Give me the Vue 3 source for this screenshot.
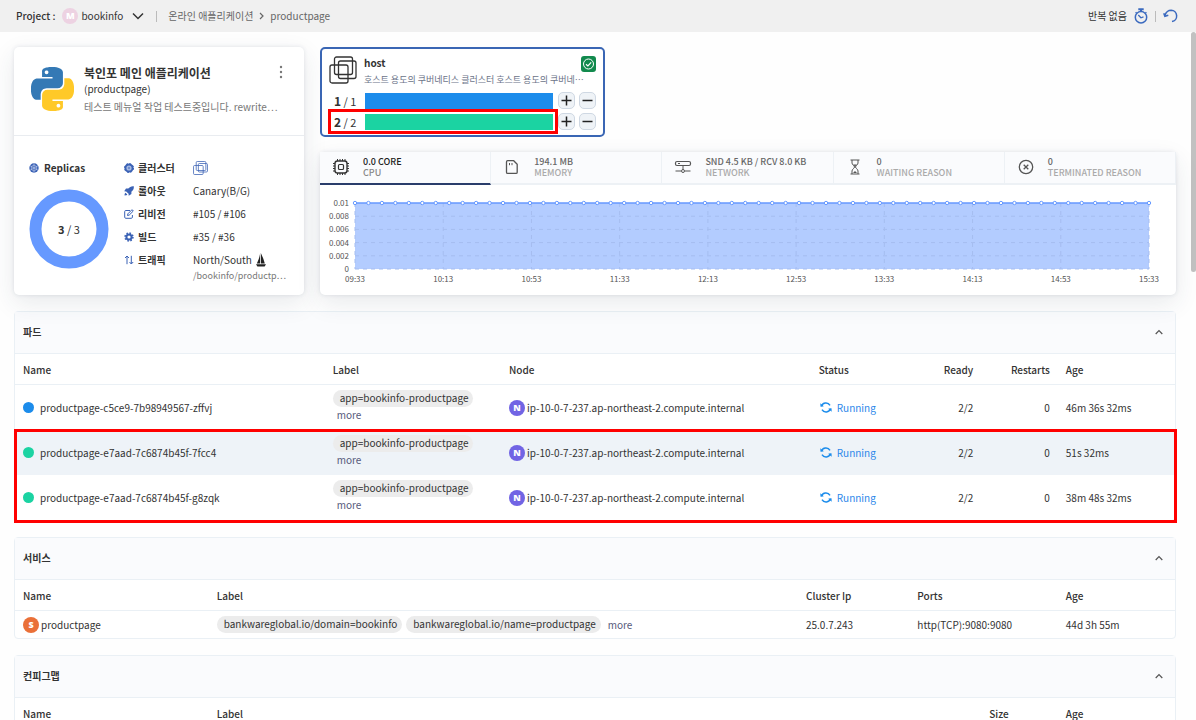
<script setup>
import { ref } from 'vue'

const infoRows = [
  { icon: 'helm', label: '클러스터', value: '' },
  { icon: 'rocket', label: '롤아웃', value: 'Canary(B/G)' },
  { icon: 'edit', label: '리비전', value: '#105 / #106' },
  { icon: 'gear', label: '빌드', value: '#35 / #36' },
  { icon: 'arrows', label: '트래픽', value: 'North/South' },
]

const hostRows = [
  { current: 1, total: 1, tone: 'blue', marked: false },
  { current: 2, total: 2, tone: 'green', marked: true },
]

const activeTab = ref('cpu')
const tabs = [
  { id: 'cpu', value: '0.0 CORE', label: 'CPU' },
  { id: 'memory', value: '194.1 MB', label: 'MEMORY' },
  { id: 'network', value: 'SND 4.5 KB / RCV 8.0 KB', label: 'NETWORK' },
  { id: 'waiting', value: '0', label: 'WAITING REASON' },
  { id: 'terminated', value: '0', label: 'TERMINATED REASON' },
]

const yTicks = ['0.01', '0.008', '0.006', '0.004', '0.002', '0']
const xTicks = ['09:33', '10:13', '10:53', '11:33', '12:13', '12:53', '13:33', '14:13', '14:53', '15:33']
const points = Array.from({ length: 60 }, (_, i) => (i * 100) / 59 + '%')
const tickX = (i) => (i * 100) / 9 + '%'
const tickY = (i) => i * 20 + '%'

const pods = [
  { name: 'productpage-c5ce9-7b98949567-zffvj', tone: 'blue', age: '46m 36s 32ms' },
  { name: 'productpage-e7aad-7c6874b45f-7fcc4', tone: 'green', age: '51s 32ms' },
  { name: 'productpage-e7aad-7c6874b45f-g8zqk', tone: 'green', age: '38m 48s 32ms' },
]
</script>

<template>
  <div class="app">
    <header class="topbar">
      <span class="project-label">Project :</span>
      <button class="project-button" type="button">
        <span class="badge badge-m">M</span>
        <span>bookinfo</span>
        <svg width="12" height="8" viewBox="0 0 12 8"><path d="M1 1.5l5 5 5-5" fill="none" stroke="#333" stroke-width="1.5" /></svg>
      </button>
      <span class="bar-divider"></span>
      <nav class="crumbs">
        <a href="#">온라인 애플리케이션</a>
        <svg width="5" height="8" viewBox="0 0 5 8"><path d="M1 1l3 3-3 3" fill="none" stroke="#666" stroke-width="1.2" /></svg>
        <a href="#">productpage</a>
      </nav>
      <div class="refresh">
        <span>반복 없음</span>
        <button type="button" aria-label="반복 설정">
          <svg width="14" height="16" viewBox="0 0 14 16" fill="none" stroke="#3b6abf" stroke-width="1.5"><circle cx="7" cy="9.3" r="5.7" /><path d="M7 3.5V1.5M4.3 1.2h5.4" stroke-width="2" /><path d="M4.3 7l2.6 2.8 2.6-.9M1.6 4.2l1 1M12.4 4.2l-1 1" stroke-width="1.3" /></svg>
        </button>
        <span class="bar-divider"></span>
        <button type="button" aria-label="새로고침">
          <svg width="15" height="14" viewBox="0 0 15 14" fill="none" stroke="#3b6abf" stroke-width="1.5"><path d="M2 6.3C3 3.3 5.400 1.300 8.200 1.300a5.700 5.700 0 0 1 .8 11.300" /><path d="M.8 4.200L1.900 7.300l3.400-1" stroke-width="1.600" /></svg>
        </button>
      </div>
    </header>

    <main class="content">
      <div class="scroll-thumb"></div>

      <div class="overview">
        <section class="card app-card">
          <div class="app-head">
            <svg class="python" width="43" height="44" viewBox="0 0 24 24" preserveAspectRatio="none">
              <path fill="#3479b5" fill-rule="evenodd" d="M14.25.18l.9.2.73.26.59.3.45.32.34.34.25.34.16.33.1.3.04.26.02.2-.01.13V8.500l-.05.63-.13.55-.21.46-.26.38-.3.31-.33.25-.35.19-.35.14-.33.1-.3.07-.26.04-.21.02H8.770l-.69.05-.59.14-.5.22-.41.27-.33.32-.27.35-.2.36-.15.37-.1.35-.07.32-.04.27-.02.21v3.060H3.170l-.21-.03-.28-.07-.32-.12-.35-.18-.36-.26-.36-.36-.35-.46-.32-.59-.28-.73-.21-.88-.14-1.050-.05-1.230.06-1.220.16-1.040.24-.87.32-.71.36-.57.4-.44.42-.33.42-.24.4-.16.36-.1.32-.05.24-.01h.16l.06.01h8.160v-.83H6.180l-.01-2.750-.02-.37.05-.34.11-.31.17-.28.25-.26.31-.23.38-.2.44-.18.51-.15.58-.12.64-.1.71-.06.77-.04.84-.02 1.270.05zM7.950 2.160l-.23.33-.08.41.08.41.23.34.33.22.41.09.41-.09.33-.22.23-.34.08-.41-.08-.41-.23-.33-.33-.22-.41-.09-.41.09z" />
              <path fill="#ffc928" fill-rule="evenodd" d="M21.040 6.110l.28.06.32.12.35.18.36.27.36.35.35.47.32.59.28.73.21.88.14 1.040.05 1.230-.06 1.230-.16 1.040-.24.86-.32.71-.36.57-.4.45-.42.33-.42.24-.4.16-.36.09-.32.05-.24.02-.16-.01h-8.220v.82h5.840l.01 2.760.02.36-.05.34-.11.31-.17.29-.25.25-.31.24-.38.2-.44.17-.51.15-.58.13-.64.09-.71.07-.77.04-.84.01-1.270-.04-1.070-.14-.9-.2-.73-.25-.59-.3-.45-.33-.34-.34-.25-.34-.16-.33-.1-.3-.04-.25-.02-.2.01-.13v-5.340l.05-.64.13-.54.21-.46.26-.38.3-.32.33-.24.35-.2.35-.14.33-.1.3-.06.26-.04.21-.02.13-.01h5.840l.69-.05.59-.14.5-.21.41-.28.33-.32.27-.35.2-.36.15-.36.1-.35.07-.32.04-.28.02-.21V6.070h2.090zM14.570 20.360l-.23.33-.08.41.08.41.23.33.33.23.41.08.41-.08.33-.23.23-.33.08-.41-.08-.41-.23-.33-.33-.23-.41-.08-.41.08z" />
            </svg>
            <div class="app-title">
              <h1>북인포 메인 애플리케이션</h1>
              <p>(productpage)</p>
              <p class="desc">테스트 메뉴얼 작업 테스트중입니다. rewrite⋯</p>
            </div>
            <button class="kebab" type="button" aria-label="메뉴">
              <svg width="4" height="14" viewBox="0 0 4 14" fill="#777"><circle cx="2" cy="2" r="1.200" /><circle cx="2" cy="7" r="1.200" /><circle cx="2" cy="12" r="1.200" /></svg>
            </button>
          </div>
          <div class="app-body">
            <div class="replicas">
              <div class="info-label">
                <svg width="10" height="10" viewBox="0 0 10 10"><circle cx="5" cy="5" r="4.700" fill="#3b62b5" /><path d="M5 .5v9M1 2.700l8 4.600M9 2.700L1 7.300M5 2L2.400 3.500v3L5 8l2.600-1.500v-3z" fill="none" stroke="#c3d0ec" stroke-width=".6" /></svg>
                <span>Replicas</span>
              </div>
              <div class="donut">
                <svg width="80" height="80" viewBox="0 0 80 80"><circle cx="40" cy="40" r="33.500" fill="none" stroke="#6699ff" stroke-width="12" /></svg>
                <span><b>3</b> / 3</span>
              </div>
            </div>
            <dl class="info">
              <template v-for="row in infoRows" :key="row.icon">
                <dt class="info-label">
                  <svg v-if="row.icon === 'helm'" width="10" height="10" viewBox="0 0 10 10"><circle cx="5" cy="5" r="3.600" fill="#a9bce3" stroke="#3b62b5" stroke-width="2" /><circle cx="5" cy="5" r="4.500" fill="none" stroke="#3b62b5" stroke-width="1" stroke-dasharray="2 1.500" /><circle cx="5" cy="5" r="1.200" fill="#6f8dcc" /></svg>
                  <svg v-else-if="row.icon === 'rocket'" width="10" height="10" viewBox="0 0 10 10"><path fill="#3b62b5" d="M9.800.2C7.500-.1 5.500.8 4.300 2.600H2L.2 5.300l2 .1 2.400 2.400.1 2L7.400 8V5.700C9.200 4.500 10.100 2.500 9.800.2zM1.500 6.700C.7 7.200.5 8.200.6 9.400c1.200.1 2.200-.1 2.700-.9z" /></svg>
                  <svg v-else-if="row.icon === 'edit'" width="10" height="10" viewBox="0 0 10 10" fill="none" stroke="#3b62b5"><path d="M6 1.500H1.800C1 1.500.7 2 .7 2.600v5.600c0 .7.400 1.100 1.100 1.100h5.500c.7 0 1.100-.4 1.100-1.100V6" /><path d="M3.500 6.500l.4-1.700L8 .7l1.300 1.300-4.100 4.100z" /></svg>
                  <svg v-else-if="row.icon === 'gear'" width="10" height="10" viewBox="0 0 10 10" fill="none" stroke="#3b62b5"><circle cx="5" cy="5" r="2.600" stroke-width="2" /><circle cx="5" cy="5" r="3.900" stroke-width="1.600" stroke-dasharray="1.560 1.500" /></svg>
                  <svg v-else width="10" height="10" viewBox="0 0 10 10" fill="none" stroke="#3b62b5"><path d="M3 9.200V1.200M1 3l2-2 2 2M7.300.8v8M5.500 7l1.800 2 1.900-2" /></svg>
                  <span>{{ row.label }}</span>
                </dt>
                <dd>
                  <svg v-if="row.icon === 'helm'" width="15" height="14" viewBox="0 0 28 28" preserveAspectRatio="none" fill="none" stroke="#3b62b5" stroke-width="1.500"><rect x="6" y="1" width="18" height="18" rx="2" /><rect x="10" y="5" width="17" height="17" rx="2" /><rect x="1" y="9" width="18" height="18" rx="2" /></svg>
                  <span v-else>{{ row.value }}</span>
                  <template v-if="row.icon === 'arrows'">
                    <svg class="sail" width="10" height="14" viewBox="0 0 10 14" fill="#222"><path d="M4 1v9.500H.8C2.300 7.800 3.500 4.500 4 1zM4.800 0C6.500 3.500 8 7 8.800 10.500h-4zM0 11.300h10L8.600 13.500H1.400z" /></svg>
                    <small>/bookinfo/productp⋯</small>
                  </template>
                </dd>
              </template>
            </dl>
          </div>
        </section>

        <div class="right">
          <section class="host-card">
            <div class="host-head">
              <svg width="28" height="28" viewBox="0 0 28 28" fill="none" stroke="#333" stroke-width="1.300"><rect x="5.500" y="1" width="18" height="17.500" rx="2" /><rect x="9.500" y="5" width="17.500" height="17.500" rx="2" /><rect x="1" y="9" width="18" height="18" rx="2" /></svg>
              <div class="host-title">
                <h2>host</h2>
                <p>호스트 용도의 쿠버네티스 클러스터 호스트 용도의 쿠버네⋯</p>
              </div>
              <svg class="ok" width="15" height="16" viewBox="0 0 15 16"><rect width="15" height="16" rx="3" fill="#128a4e" /><g fill="none" stroke="#fff"><circle cx="7.500" cy="8" r="5" /><path d="M5 8.200l1.900 1.800 3.300-3.700" stroke-width="1.200" /></g></svg>
            </div>
            <div v-for="row in hostRows" :key="row.current" class="host-row">
              <span class="ratio"><b>{{ row.current }}</b> / {{ row.total }}</span>
              <span class="bar" :class="row.tone"></span>
              <button type="button" aria-label="늘리기"><svg width="11" height="11" viewBox="0 0 11 11"><path d="M.5 5.500h10M5.500.5v10" stroke="#222" stroke-width="1.500" /></svg></button>
              <button type="button" aria-label="줄이기"><svg width="11" height="11" viewBox="0 0 11 11"><path d="M.5 5.500h10" stroke="#222" stroke-width="1.500" /></svg></button>
              <span v-if="row.marked" class="row-mark"></span>
            </div>
          </section>

          <section class="card chart-card">
            <div class="tabs" role="tablist">
              <button v-for="tab in tabs" :key="tab.id" type="button" role="tab" :aria-selected="activeTab === tab.id" :class="{ active: activeTab === tab.id }" @click="activeTab = tab.id">
                <svg width="18" height="18" viewBox="0 0 18 18" fill="none" stroke="#555">
                  <g v-if="tab.id === 'cpu'" stroke="#333"><rect x="3" y="3" width="12" height="12" rx="2.500" stroke-width="1.400" /><rect x="6.500" y="6.500" width="5" height="5" rx="1" stroke-width="1.200" /><path d="M5.500 1v2M8 1v2M10.500 1v2M13 1v2M5.500 15v2M8 15v2M10.500 15v2M13 15v2M1 5.500h2M1 8h2M1 10.500h2M1 13h2M15 5.500h2M15 8h2M15 10.500h2M15 13h2" /></g>
                  <g v-else-if="tab.id === 'memory'"><path d="M4.700 2.700h6l3.500 3.500v8c0 .8-.4 1.200-1.200 1.200H4.700c-.8 0-1.200-.4-1.200-1.200V3.900c0-.8.4-1.200 1.200-1.200z" stroke-width="1.300" /><path d="M6.500 5v2.200M9 5v2.200" /></g>
                  <g v-else-if="tab.id === 'network'"><rect x="1.500" y="3.500" width="15" height="4" rx="1.500" stroke-width="1.200" /><path d="M9 7.500v4M1.500 13h5.500M11 13h5.500M4 5.500h2" /><circle cx="9" cy="13" r="1.500" /></g>
                  <g v-else-if="tab.id === 'waiting'"><path d="M4.500 2h9M4.500 16h9M6 2v3c0 2 2.500 2.500 2.500 4S6 11 6 13v3M12 2v3c0 2-2.500 2.500-2.500 4s2.500 2 2.500 4v3" /><path d="M7 6.500h4L9 8.500zM7 15l2-2 2 2z" fill="#555" stroke="none" /></g>
                  <g v-else><circle cx="9" cy="9" r="6.700" stroke-width="1.300" /><path d="M6.700 6.700l4.600 4.600M11.300 6.700l-4.600 4.600" stroke-width="1.300" /></g>
                </svg>
                <span class="tab-text"><span>{{ tab.value }}</span><small>{{ tab.label }}</small></span>
              </button>
            </div>
            <div class="chart">
              <svg class="plot" width="100%" height="66">
                <rect width="100%" height="100%" fill="#b3ccff" />
                <g stroke="#a5bdf0" stroke-dasharray="4 4">
                  <line v-for="i in 5" :key="'h' + i" x1="0" x2="100%" :y1="tickY(i)" :y2="tickY(i)" />
                  <line v-for="i in 10" :key="'v' + i" :x1="tickX(i - 1)" :x2="tickX(i - 1)" y1="0" y2="100%" />
                </g>
                <line x1="0" x2="100%" y1="0" y2="0" stroke="#6699ff" stroke-width="1.500" />
                <g fill="#fff" stroke="#6699ff"><circle v-for="x in points" :key="x" :cx="x" cy="0" r="1.700" /></g>
                <g class="axis" text-anchor="end"><text v-for="(t, i) in yTicks" :key="t" x="0" dx="-6" :y="tickY(i)" dy="3">{{ t }}</text></g>
                <g class="axis" text-anchor="middle"><text v-for="(t, i) in xTicks" :key="t" :x="tickX(i)" y="100%" dy="13">{{ t }}</text></g>
              </svg>
            </div>
          </section>
        </div>
      </div>

      <section class="panel">
        <header class="panel-head">
          <h2>파드</h2>
          <button type="button" aria-label="접기"><svg width="8" height="6" viewBox="0 0 8 6"><path d="M.7 5L4 1.500 7.300 5" fill="none" stroke="#555" stroke-width="1.200" /></svg></button>
        </header>
        <table class="pods">
          <colgroup><col class="w-310"><col class="w-176"><col class="w-310"><col class="w-107"><col class="w-64"><col class="w-77"><col></colgroup>
          <thead><tr><th>Name</th><th>Label</th><th>Node</th><th>Status</th><th class="num">Ready</th><th class="num">Restarts</th><th>Age</th></tr></thead>
          <tbody>
            <tr v-for="(pod, i) in pods" :key="pod.name" :class="{ tinted: i === 1 }">
              <td><span class="with-icon"><i class="dot" :class="pod.tone"></i>{{ pod.name }}</span></td>
              <td class="label-cell"><span class="pill">app=bookinfo-productpage</span><a class="more" href="#">more</a></td>
              <td><span class="with-icon node"><span class="badge badge-n">N</span>ip-10-0-7-237.ap-northeast-2.compute.internal</span></td>
              <td>
                <span class="with-icon running">
                  <svg width="12" height="11" viewBox="0 0 12 11" fill="none" stroke="#1c8ceb" stroke-width="1.500"><path d="M1.500 4.200A4.700 4.700 0 0 1 10 3.300M10.500 6.800A4.700 4.700 0 0 1 2 7.700" /><path d="M.3 1.300l.2 3.500 3.400-.6zM11.700 9.700l-.2-3.500-3.400.6z" fill="#1c8ceb" stroke="none" /></svg>
                  Running
                </span>
              </td>
              <td class="num">2/2</td>
              <td class="num">0</td>
              <td>{{ pod.age }}</td>
            </tr>
          </tbody>
        </table>
        <div class="pods-mark"></div>
      </section>

      <section class="panel">
        <header class="panel-head">
          <h2>서비스</h2>
          <button type="button" aria-label="접기"><svg width="8" height="6" viewBox="0 0 8 6"><path d="M.7 5L4 1.500 7.300 5" fill="none" stroke="#555" stroke-width="1.200" /></svg></button>
        </header>
        <table class="services">
          <colgroup><col class="w-194"><col class="w-589"><col class="w-111"><col class="w-149"><col></colgroup>
          <thead><tr><th>Name</th><th>Label</th><th>Cluster Ip</th><th>Ports</th><th>Age</th></tr></thead>
          <tbody>
            <tr>
              <td><span class="with-icon node"><span class="badge badge-s">S</span>productpage</span></td>
              <td><span class="labels"><span class="pill">bankwareglobal.io/domain=bookinfo</span><span class="pill">bankwareglobal.io/name=productpage</span><a class="more" href="#">more</a></span></td>
              <td>25.0.7.243</td>
              <td>http(TCP):9080:9080</td>
              <td>44d 3h 55m</td>
            </tr>
          </tbody>
        </table>
      </section>

      <section class="panel">
        <header class="panel-head">
          <h2>컨피그맵</h2>
          <button type="button" aria-label="접기"><svg width="8" height="6" viewBox="0 0 8 6"><path d="M.7 5L4 1.500 7.300 5" fill="none" stroke="#555" stroke-width="1.200" /></svg></button>
        </header>
        <table>
          <colgroup><col class="w-194"><col class="w-772"><col class="w-77"><col></colgroup>
          <thead><tr><th>Name</th><th>Label</th><th>Size</th><th>Age</th></tr></thead>
        </table>
      </section>
    </main>
  </div>
</template>

<style>
body {
  background: #fefefe;
}
</style>

<style scoped>
* {
  box-sizing: border-box;
}
.app {
  display: flex;
  flex-direction: column;
  height: 100vh;
  overflow: hidden;
  color: #333;
  font: 10px/16px "Noto Sans CJK KR", "Noto Sans", sans-serif;
}
h1, h2, p, dl, dd {
  margin: 0;
}
svg {
  display: block;
  flex: none;
}
a {
  color: inherit;
  text-decoration: none;
}
button {
  display: flex;
  align-items: center;
  justify-content: center;
  padding: 0;
  border: 0;
  background: none;
  color: inherit;
  font: inherit;
  cursor: pointer;
}

.topbar {
  display: flex;
  flex: none;
  align-items: center;
  height: 32px;
  padding: 0 18px 0 16px;
  background: #f0f0f0;
}
.project-label {
  margin-right: 7px;
  font-weight: 500;
}
.project-button {
  gap: 3px;
}
.project-button svg {
  margin-left: 6px;
}
.bar-divider {
  width: 1px;
  height: 11px;
  background: #bbb;
}
.topbar > .bar-divider {
  margin: 0 11px 0 12px;
}
.crumbs {
  display: flex;
  align-items: center;
  gap: 6px;
  color: #666;
}
.refresh {
  display: flex;
  align-items: center;
  gap: 7px;
  margin-left: auto;
}
.badge {
  display: inline-flex;
  flex: none;
  align-items: center;
  justify-content: center;
  width: 16px;
  height: 16px;
  border-radius: 50%;
  color: #fff;
  font: 800 9px/16px "Open Sans", sans-serif;
}
.badge-m {
  background: #edd2e2;
}
.badge-n {
  background: #7164e4;
}
.badge-s {
  background: #ea7038;
}

.content {
  position: relative;
  display: flex;
  flex: 1;
  flex-direction: column;
  gap: 16px;
  min-height: 0;
  padding: 15px 20px 0 14px;
  overflow: hidden;
}
.content > * {
  flex: none;
}
.scroll-thumb {
  position: absolute;
  top: 0;
  right: 0;
  width: 5px;
  height: 240px;
  border-radius: 3px;
  background: #c1c1c1;
}
.overview {
  position: relative;
  z-index: 1;
  display: grid;
  grid-template-columns: 290px 1fr;
  gap: 16px;
}
.card {
  border-radius: 5px;
  background: #fff;
  box-shadow: 0 0 4px rgba(40, 60, 80, 0.12), 0 8px 24px rgba(40, 60, 80, 0.1);
}

.app-head {
  display: flex;
  height: 89px;
  padding: 18px 21px 0 17px;
  border-bottom: 1px solid #e9ecf0;
}
.python {
  margin: 2px 10px 0 0;
}
.app-title {
  white-space: nowrap;
}
.app-title h1 {
  font-size: 12px;
  font-weight: 700;
  line-height: 16px;
}
.app-title .desc {
  color: #777;
  line-height: 20px;
}
.kebab {
  align-self: flex-start;
  margin-left: auto;
}
.app-body {
  display: flex;
  padding: 21px 14px 14px 15px;
}
.replicas {
  width: 95px;
}
.info-label {
  display: flex;
  align-items: center;
  gap: 4px;
  height: 22px;
  font-weight: 700;
}
.replicas .info-label {
  gap: 5px;
}
.donut {
  display: grid;
  place-items: center;
  width: 80px;
  margin-top: 10px;
  font-size: 11px;
}
.donut > * {
  grid-area: 1 / 1;
}
.info {
  display: grid;
  flex: 1;
  grid-template-columns: 69px 1fr;
  row-gap: 1px;
  min-width: 0;
}
.info dd {
  display: flex;
  flex-wrap: wrap;
  align-items: center;
  min-width: 0;
  min-height: 22px;
  line-height: 22px;
}
.info small {
  width: 100%;
  color: #777;
  font-size: 9px;
  line-height: 10px;
  white-space: nowrap;
}
.sail {
  margin-left: 4px;
}

.right {
  display: flex;
  flex-direction: column;
  gap: 15px;
  min-width: 0;
}
.host-card {
  width: 285px;
  height: 90px;
  padding: 7px 7px 0;
  border: 2px solid #3a66b4;
  border-radius: 5px;
  background: #fff;
}
.host-head {
  display: flex;
  height: 34px;
}
.host-title {
  flex: 1;
  margin-left: 7px;
}
.host-title h2 {
  font-size: 10px;
  line-height: 14px;
}
.host-title p {
  width: 232px;
  margin-top: 2px;
  color: #6b7388;
  font-size: 9px;
  white-space: nowrap;
}
.ok {
  margin-left: -16px;
}
.host-row {
  position: relative;
  display: flex;
  align-items: center;
  height: 21px;
}
.ratio {
  width: 36px;
  padding-left: 5px;
  font-size: 11px;
}
.ratio b {
  font-size: 12px;
}
.bar {
  flex: 1;
  height: 16px;
}
.blue {
  background: #1c8ceb;
}
.green {
  background: #1bd3a2;
}
.host-row button {
  width: 17px;
  height: 17px;
  margin-left: 4px;
  border: 1px solid #cfd8e3;
  border-radius: 5px;
  background: #eff3f7;
}
.bar + button {
  margin-left: 5px;
}
.row-mark {
  position: absolute;
  inset: -2px 38px -2px -1px;
  border: 3px solid #f00;
}

.chart-card {
  flex: 1;
}
.tabs {
  display: grid;
  grid-template-columns: repeat(5, 1fr);
  height: 33px;
}
.tabs button {
  justify-content: flex-start;
  gap: 13px;
  padding: 0 0 1px 12px;
  border-right: 1px solid #edf1f5;
  border-bottom: 2px solid #edf1f5;
  background: #fafbfd;
  color: #666;
  text-align: left;
}
.tabs button.active {
  border-bottom-color: #2a3d6b;
  color: #222;
}
.tab-text {
  display: flex;
  flex-direction: column;
  font-size: 9px;
  font-weight: 500;
  line-height: 11px;
}
.tab-text small {
  color: #aaa;
  font-size: 9px;
}
.tabs .active small {
  color: #888;
}
.chart {
  padding: 18px 27px 26px 35px;
}
.plot {
  overflow: visible;
}
.axis {
  fill: #555;
  font-size: 8px;
}

.panel {
  position: relative;
  border: 1px solid #eaf0f5;
  border-radius: 4px;
  background: #fff;
}
.panel-head {
  display: flex;
  align-items: center;
  justify-content: space-between;
  height: 42px;
  padding: 0 12px 2px 8px;
  border-bottom: 1px solid #eaf0f5;
  background: #fafbfd;
}
.panel-head h2 {
  font-size: 10px;
}
table {
  width: 100%;
  border-collapse: separate;
  border-spacing: 0;
  table-layout: fixed;
}
th, td {
  padding: 0 8px;
  text-align: left;
  white-space: nowrap;
}
th {
  height: 31px;
  padding-top: 2px;
  border-bottom: 1px solid #eaf0f5;
  font-weight: 500;
}
.pods td {
  height: 45px;
}
.services td {
  height: 27px;
}
th.num,
td.num {
  text-align: right;
}
.tinted {
  background: #eef3f8;
}
.w-310 { width: 26.7%; }
.w-176 { width: 15.2%; }
.w-107 { width: 9.2%; }
.w-64 { width: 5.5%; }
.w-77 { width: 6.6%; }
.w-194 { width: 16.7%; }
.w-589 { width: 50.8%; }
.w-111 { width: 9.6%; }
.w-149 { width: 12.8%; }
.w-772 { width: 66.6%; }
.with-icon {
  display: flex;
  align-items: center;
  gap: 6px;
}
.node {
  gap: 2px;
}
.dot {
  width: 11px;
  height: 11px;
  border-radius: 50%;
}
.running {
  gap: 5px;
  padding-left: 1px;
  color: #2b87ea;
}
.pods .label-cell {
  padding-bottom: 2px;
}
.label-cell .more {
  display: block;
  margin-left: 4px;
}
.pill {
  display: inline-block;
  height: 17px;
  padding: 0 5px 0 7px;
  border-radius: 9px;
  background: #ececec;
  line-height: 16px;
  vertical-align: top;
}
.labels {
  display: flex;
  align-items: center;
  gap: 4px;
}
.more {
  color: #56597a;
}
.labels .more {
  margin-left: 3px;
}
.pods-mark {
  position: absolute;
  inset: 117px -2px -3px -1px;
  border: 3px solid #f00;
}
</style>
